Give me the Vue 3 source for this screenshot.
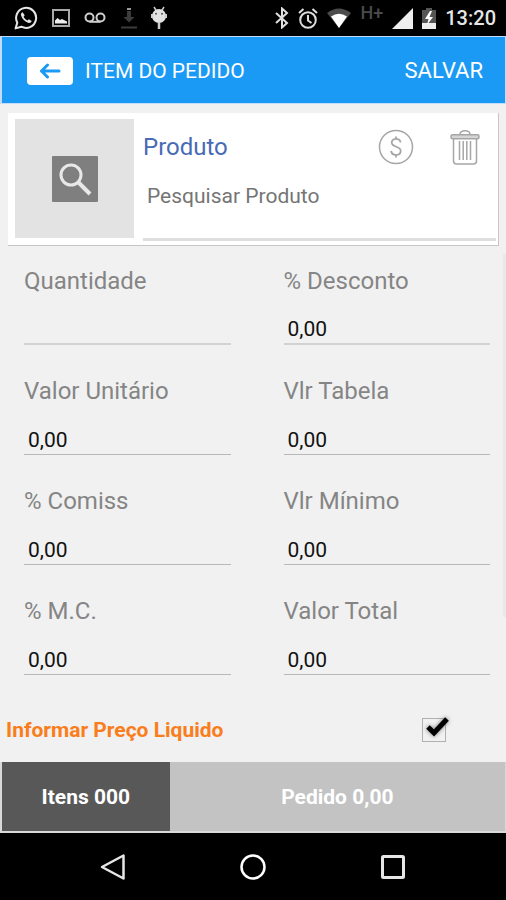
<script setup>
import { ref } from 'vue'

const fields = ref([
  { id: 'quantidade', label: 'Quantidade', value: '' },
  { id: 'desconto', label: '% Desconto', value: '0,00' },
  { id: 'unitario', label: 'Valor Unitário', value: '0,00' },
  { id: 'tabela', label: 'Vlr Tabela', value: '0,00' },
  { id: 'comiss', label: '% Comiss', value: '0,00' },
  { id: 'minimo', label: 'Vlr Mínimo', value: '0,00' },
  { id: 'mc', label: '% M.C.', value: '0,00' },
  { id: 'total', label: 'Valor Total', value: '0,00' },
])
const produto = ref('')
const liquido = ref(true)
</script>

<template>
  <div class="screen">
    <div class="status">
      <div class="status-left">
        <svg width="24" height="24" viewBox="0 0 24 24" fill="none" stroke="#e6e6e6">
          <path d="M1.600 22.400l1.700-5.800A10 10 0 1 1 7.400 20.700z" stroke-width="2" stroke-linejoin="round" />
          <path d="M8.600 6.200c-1.500.5-2 2-1.400 3.600 1.100 3.300 3.500 5.700 6.800 6.900 1.700.6 3.300-.2 3.700-1.800l-2.800-1.700-1.400 1.300c-1.800-.8-3-2-3.900-3.800l1.100-1.400z" fill="#e6e6e6" stroke="none" />
        </svg>
        <svg width="18" height="18" viewBox="0 0 18 18">
          <rect x="1" y="1" width="16" height="16" fill="none" stroke="#a9a9a9" stroke-width="2" />
          <path d="M3 14.500v-3l2.500-2.500 2.500 2 2-1 5 2.500v2z" fill="#eee" />
        </svg>
        <svg width="22" height="12" viewBox="0 0 22 12" fill="none" stroke="#cfcfcf" stroke-width="2">
          <circle cx="5.500" cy="5.500" r="4" />
          <circle cx="16.500" cy="5.500" r="4" />
          <path d="M5.500 9.800h11" />
        </svg>
        <svg width="17" height="22" viewBox="0 0 17 22">
          <path d="M7 4h4v6h3.500L9 15.500 3.500 10H7z" fill="#3c3c3c" />
          <path d="M7 1h4v2H7z" fill="#999" />
          <path d="M1 20.500h16" stroke="#3c3c3c" stroke-width="2" />
        </svg>
        <svg width="16" height="24" viewBox="0 0 16 24">
          <path d="M3 1l2.500 4M13 1l-2.500 4" stroke="#ccc" stroke-width="1.500" />
          <circle cx="8" cy="10" r="7" fill="#e2e2e2" />
          <path d="M1 8v4M15 8v4M8 16v7" stroke="#cdcdcd" stroke-width="2.500" />
          <circle cx="5" cy="7.800" r="1" fill="#555" />
          <circle cx="11" cy="7.800" r="1" fill="#555" />
        </svg>
      </div>
      <div class="status-right">
        <svg width="14" height="22" viewBox="0 0 14 22" fill="none" stroke="#e0e0e0" stroke-width="2">
          <path d="M1 6l11 10-5 4.500v-19L12 6 1 16" />
        </svg>
        <svg width="20" height="21" viewBox="0 0 20 21" fill="none" stroke="#ddd" stroke-width="2">
          <circle cx="10" cy="12" r="7.800" />
          <path d="M10 7v5.500l3.500 2.500M1 5l4.500-4M19 5l-4.500-4" />
        </svg>
        <svg width="24" height="20" viewBox="0 0 24 20">
          <path d="M0 5Q12-4 24 5L12 20z" fill="#4b4b4b" />
          <path d="M4 8.500q8-5.500 16 0L12 20z" fill="#fff" />
        </svg>
        <span class="network">H+</span>
        <svg width="21" height="21" viewBox="0 0 21 21"><path d="M21 0v21H0z" fill="#eee" /></svg>
        <svg width="14" height="21" viewBox="0 0 14 21">
          <path d="M4 0h6v2h4v14H0V2h4z" fill="#555" />
          <path d="M0 15h14v6H0z" fill="#eee" />
          <path d="M8 3L3 11h3.500L5 17l6-8H7.500L10 3z" fill="#fff" />
        </svg>
        <span class="clock">13:20</span>
      </div>
    </div>

    <header class="bar">
      <button class="back" type="button" aria-label="Voltar">
        <svg width="22" height="16" viewBox="0 0 22 16" fill="none" stroke="#1b9af5" stroke-width="3" stroke-linecap="round" stroke-linejoin="round">
          <path d="M20 8H2.500M8.500 2L2.500 8l6 6" />
        </svg>
      </button>
      <h1 class="title">ITEM DO PEDIDO</h1>
      <button class="save" type="button">SALVAR</button>
    </header>

    <section class="card">
      <button class="thumb" type="button" aria-label="Pesquisar">
        <svg width="46" height="46" viewBox="0 0 46 46">
          <rect width="46" height="46" rx="1" fill="#7f7f7f" />
          <circle cx="19" cy="19" r="10" fill="none" stroke="#e8e8e8" stroke-width="3" />
          <path d="M26 26l12 12" stroke="#e8e8e8" stroke-width="4" />
        </svg>
      </button>
      <div class="product">
        <div class="product-head">
          <label class="product-label" for="produto">Produto</label>
          <button class="icon" type="button" aria-label="Preço">
            <svg width="36" height="36" viewBox="0 0 36 36" fill="none" stroke="#a6a6a6">
              <circle cx="18" cy="18" r="16.500" stroke-width="1.500" />
              <path d="M22.500 13.500c-.2-2.400-2-3.700-4.500-3.700s-4.300 1.500-4.300 3.800c0 5.300 9 3 9 8.300 0 2.500-2 4-4.700 4s-4.700-1.500-4.800-4M18 7.500v2.300M18 26v2.500" stroke-width="1.800" />
            </svg>
          </button>
          <button class="icon" type="button" aria-label="Excluir">
            <svg width="30" height="36" viewBox="0 0 30 36" fill="none" stroke="#a6a6a6" stroke-width="1.500">
              <path d="M10 5.500c0-5 10-5 10 0" />
              <rect x="1" y="5.800" width="28" height="4" rx="1.500" fill="#d5d5d5" />
              <path d="M3.500 10v22q0 3 3 3h17q3 0 3-3V10" />
              <path d="M9.500 12v19M13.200 12v19M16.800 12v19M20.500 12v19" />
            </svg>
          </button>
        </div>
        <input id="produto" v-model="produto" class="search" type="text" placeholder="Pesquisar Produto" />
      </div>
    </section>

    <main class="form">
      <div v-for="f in fields" :key="f.id" class="field">
        <label class="field-label" :for="f.id">{{ f.label }}</label>
        <input :id="f.id" v-model="f.value" class="field-input" type="text" inputmode="decimal" />
      </div>
    </main>

    <label class="option">
      <span>Informar Preço Liquido</span>
      <span class="tick">
        <input v-model="liquido" class="tick-box" type="checkbox" />
        <svg v-if="liquido" class="tick-mark" width="30" height="28" viewBox="0 0 30 28">
          <path d="M6 13l6 6L25 5" fill="none" stroke="#000" stroke-width="5" />
        </svg>
      </span>
    </label>

    <div class="tabs">
      <button class="tab tab-items" type="button">Itens 000</button>
      <button class="tab tab-order" type="button">Pedido 0,00</button>
    </div>

    <nav class="nav">
      <button class="nav-key" type="button" aria-label="Voltar">
        <svg width="28" height="28" viewBox="0 0 28 28"><path d="M24.500 2.500v23L3 14z" fill="none" stroke="#e6e6e6" stroke-width="2.500" stroke-linejoin="round" /></svg>
      </button>
      <button class="nav-key" type="button" aria-label="Início">
        <svg width="28" height="28" viewBox="0 0 28 28"><circle cx="14" cy="14" r="11.500" fill="none" stroke="#fff" stroke-width="2.500" /></svg>
      </button>
      <button class="nav-key" type="button" aria-label="Recentes">
        <svg width="28" height="28" viewBox="0 0 28 28"><rect x="3.500" y="3.500" width="21" height="21" rx="1" fill="none" stroke="#e6e6e6" stroke-width="3" /></svg>
      </button>
    </nav>
  </div>
</template>

<style>
body {
  margin: 0;
  background: #f1f1f1;
}
</style>

<style scoped>
.screen {
  display: flex;
  flex-direction: column;
  min-height: 100vh;
  background: #f1f1f1;
  font-family: Roboto, "Liberation Sans", sans-serif;
}
button,
input {
  font-family: inherit;
  margin: 0;
  padding: 0;
  border: 0;
  border-radius: 0;
  background: none;
  box-sizing: border-box;
}
svg {
  display: block;
  flex: none;
}
.status {
  display: flex;
  justify-content: space-between;
  align-items: center;
  height: 36px;
  padding: 0 10px 0 14px;
  background: #000;
}
.status-left {
  display: flex;
  align-items: center;
  gap: 14px;
}
.status-right {
  display: flex;
  align-items: center;
  gap: 9px;
}
.network {
  align-self: flex-start;
  font-size: 18px;
  line-height: 14px;
  font-weight: 500;
  color: #4a4a4a;
}
.clock {
  font-size: 20px;
  line-height: 24px;
  font-weight: 500;
  color: #e6e6e6;
}
.bar {
  display: flex;
  align-items: center;
  height: 68px;
  box-sizing: border-box;
  padding: 2px 22px 0 25px;
  border: solid #c4dcfa;
  border-width: 1px 1px 1px 2px;
  background: #1b9af5;
  color: #fff;
}
.back {
  display: flex;
  align-items: center;
  justify-content: center;
  width: 46px;
  height: 28px;
  border-radius: 4px;
  background: #fff;
}
.title {
  flex: 1;
  margin: 0 0 0 12px;
  font-size: 21px;
  line-height: 28px;
  font-weight: 400;
}
.save {
  font-size: 22px;
  line-height: 28px;
  color: #fff;
}
.card {
  display: flex;
  gap: 9px;
  margin: 9px 7px 0 8px;
  padding: 6px 2px 4px 7px;
  border: solid #c6c6c6;
  border-width: 0 1px 1px 0;
  background: #fff;
}
.thumb {
  display: flex;
  align-items: center;
  justify-content: center;
  width: 119px;
  height: 119px;
  margin-bottom: 3px;
  background: #e3e3e3;
}
.product {
  display: flex;
  flex: 1;
  flex-direction: column;
  min-width: 0;
}
.product-head {
  display: flex;
  align-items: center;
  height: 56px;
  padding-right: 16px;
  gap: 36px;
}
.product-label {
  flex: 1;
  font-size: 24px;
  line-height: 28px;
  color: #476bb5;
}
.search {
  flex: 1;
  width: 100%;
  padding: 0 4px 22px;
  border-bottom: 3px solid #dedede;
  font-size: 21px;
  color: #111;
}
.search::placeholder {
  color: #757575;
  opacity: 1;
}
.form {
  position: relative;
  display: grid;
  grid-template-columns: 1fr 1fr;
  column-gap: 53px;
  padding: 21px 16px 0 24px;
}
/* idle scrollbar thumb */
.form::after {
  content: "";
  position: absolute;
  top: 8px;
  right: 0;
  bottom: 90px;
  width: 3px;
  background: #e9e9e9;
}
.field {
  display: flex;
  flex-direction: column;
  height: 110px;
  min-width: 0;
}
.field-label {
  font-size: 24px;
  line-height: 28px;
  color: #858585;
}
.field-input {
  width: 100%;
  height: 50px;
  padding: 20px 4px 0;
  border-bottom: 1px solid #b8b8b8;
  font-size: 21px;
  color: #111;
}
.field:nth-child(-n + 2) .field-input {
  border-bottom: 2px solid #d2d2d2;
}
.option {
  display: flex;
  align-items: center;
  justify-content: space-between;
  flex: 1;
  padding: 0 58px 10px 6px;
  font-size: 21px;
  line-height: 24px;
  font-weight: 700;
  color: #fa7d1c;
}
.tick {
  position: relative;
  display: flex;
}
.tick-box {
  appearance: none;
  width: 24px;
  height: 24px;
  margin-right: 2px;
  border: 1px solid #b0b0b0;
}
.tick-mark {
  position: absolute;
  left: 0;
  top: -4px;
  filter: drop-shadow(0 0 2px #777);
}
.tabs {
  display: flex;
  height: 71px;
  box-sizing: border-box;
  padding: 0 1px 2px 2px;
  background: #d9d9d9;
}
.tab {
  font-size: 21px;
  font-weight: 700;
  color: #fff;
}
.tab-items {
  flex: 1;
  background: #585858;
}
.tab-order {
  flex: 2;
  background: #c3c3c3;
}
.nav {
  display: flex;
  align-items: center;
  justify-content: center;
  height: 67px;
  background: #000;
  gap: 112px;
}
</style>
